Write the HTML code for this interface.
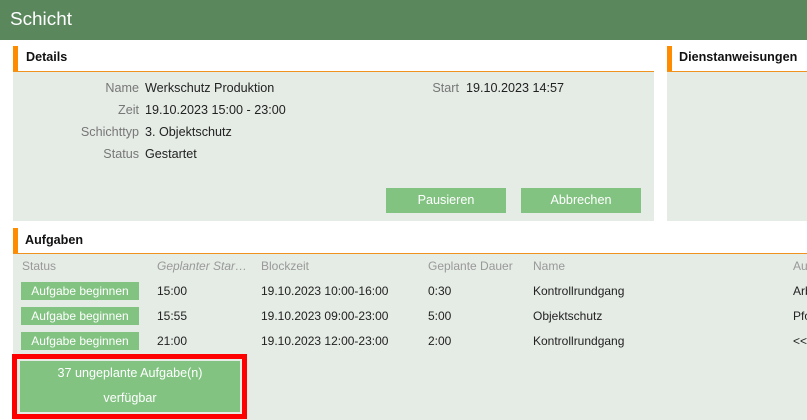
<!DOCTYPE html>
<html lang="de">
<head>
<meta charset="utf-8">
<title>Schicht</title>
<style>
html,body{margin:0;padding:0;background:#fff}
body{width:807px;height:420px;overflow:hidden;position:relative;font-family:"Liberation Sans",Arial,sans-serif;font-size:12px;color:#222}
.a{position:absolute;white-space:nowrap}
.hdr{left:0;top:0;width:807px;height:40px;background:#5a875c}
.title{left:10px;top:9px;font-size:18.9px;line-height:22px;color:#fff}
.panel{background:#e5ebe5}
.bar{background:#ff8c00;width:5px}
.line{background:#f0921e;height:1px}
.h{font-weight:bold;color:#111;font-size:12.6px;line-height:16px}
.l{color:#777;font-size:12.6px;line-height:16px;text-align:right;width:126px;left:13px}
.v{font-size:12.6px;line-height:16px;color:#222}
.btn{background:#82c382;color:#fff;text-align:center}
.big{left:386px;top:188px;width:120px;height:25px;line-height:24px;font-size:12.6px}
.tb{left:21px;width:118px;height:18px;line-height:18px}
.th{color:#999;line-height:16px;top:258px}
.c{line-height:16px;color:#222}
</style>
</head>
<body>
<div class="a hdr"></div>
<div class="a title">Schicht</div>

<div class="a bar" style="left:13px;top:46px;height:26px"></div>
<div class="a line" style="left:13px;top:71px;width:641px"></div>
<div class="a h" style="left:26px;top:49px">Details</div>
<div class="a panel" style="left:13px;top:72px;width:641px;height:149px"></div>

<div class="a l" style="top:80px">Name</div><div class="a v" style="left:145px;top:80px">Werkschutz Produktion</div>
<div class="a l" style="top:102px">Zeit</div><div class="a v" style="left:145px;top:102px">19.10.2023 15:00 - 23:00</div>
<div class="a l" style="top:124px">Schichttyp</div><div class="a v" style="left:145px;top:124px">3. Objektschutz</div>
<div class="a l" style="top:146px">Status</div><div class="a v" style="left:145px;top:146px">Gestartet</div>
<div class="a l" style="top:80px;left:333px">Start</div><div class="a v" style="left:466px;top:80px">19.10.2023 14:57</div>

<div class="a btn big">Pausieren</div>
<div class="a btn big" style="left:521px">Abbrechen</div>

<div class="a bar" style="left:667px;top:46px;height:26px"></div>
<div class="a line" style="left:667px;top:71px;width:140px"></div>
<div class="a h" style="left:679px;top:49px">Dienstanweisungen</div>
<div class="a panel" style="left:667px;top:72px;width:140px;height:149px"></div>

<div class="a bar" style="left:13px;top:228px;height:26px"></div>
<div class="a line" style="left:13px;top:253px;width:794px"></div>
<div class="a h" style="left:25px;top:232px">Aufgaben</div>
<div class="a panel" style="left:13px;top:254px;width:794px;height:166px"></div>

<div class="a th" style="left:22px">Status</div>
<div class="a th" style="left:157px;font-style:italic">Geplanter Star…</div>
<div class="a th" style="left:261px">Blockzeit</div>
<div class="a th" style="left:428px">Geplante Dauer</div>
<div class="a th" style="left:533px">Name</div>
<div class="a th" style="left:793px">Au</div>

<div class="a btn tb" style="top:282px">Aufgabe beginnen</div>
<div class="a c" style="left:157px;top:283px">15:00</div>
<div class="a c" style="left:261px;top:283px">19.10.2023 10:00-16:00</div>
<div class="a c" style="left:428px;top:283px">0:30</div>
<div class="a c" style="left:533px;top:283px">Kontrollrundgang</div>
<div class="a c" style="left:793px;top:283px">Arb</div>

<div class="a btn tb" style="top:307px">Aufgabe beginnen</div>
<div class="a c" style="left:157px;top:308px">15:55</div>
<div class="a c" style="left:261px;top:308px">19.10.2023 09:00-23:00</div>
<div class="a c" style="left:428px;top:308px">5:00</div>
<div class="a c" style="left:533px;top:308px">Objektschutz</div>
<div class="a c" style="left:793px;top:308px">Pfo</div>

<div class="a btn tb" style="top:332px">Aufgabe beginnen</div>
<div class="a c" style="left:157px;top:333px">21:00</div>
<div class="a c" style="left:261px;top:333px">19.10.2023 12:00-23:00</div>
<div class="a c" style="left:428px;top:333px">2:00</div>
<div class="a c" style="left:533px;top:333px">Kontrollrundgang</div>
<div class="a c" style="left:793px;top:333px">&lt;&lt;</div>

<div class="a" style="left:12px;top:354px;width:225px;height:55px;border:5px solid #f00"></div>
<div class="a btn" style="left:20px;top:361px;width:220px;height:51px;line-height:25px;font-size:12.6px">37 ungeplante Aufgabe(n)<br>verfügbar</div>
</body>
</html>
